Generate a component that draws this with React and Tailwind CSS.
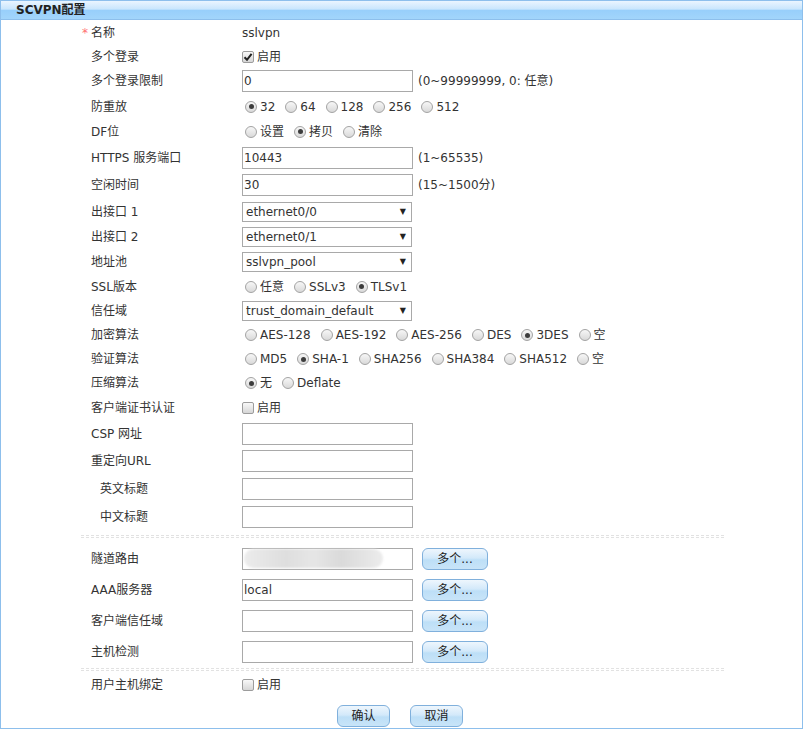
import React from 'react';

const Radio = ({ checked }) => (
  <span className="flex h-[12px] w-[12px] shrink-0 items-center justify-center rounded-full border border-[#a3a3a3] bg-[linear-gradient(to_bottom,#f7f7f7,#d9d9d9)]">
    {checked && <span className="h-[5px] w-[5px] rounded-full bg-[#3c3c3c]" />}
  </span>
);

const Check = ({ checked }) => (
  <span className="flex h-[12px] w-[12px] shrink-0 items-center justify-center rounded-[2px] border border-[#9c9c9c] bg-[linear-gradient(to_bottom,#f8f8f8,#d6d6d6)]">
    {checked && (
      <svg width="10" height="10" viewBox="0 0 10 10">
        <path d="M1.5 5.2 L4 7.8 L8.6 1.8" fill="none" stroke="#222" strokeWidth="2" />
      </svg>
    )}
  </span>
);

const RadioGroup = ({ items, checked }) => (
  <div className="ml-[3px] flex items-center gap-[10px]">
    {items.map((it) => (
      <span key={it} className="flex items-center">
        <Radio checked={it === checked} />
        <span className="ml-[3px]">{it}</span>
      </span>
    ))}
  </div>
);

const Enable = ({ checked }) => (
  <div className="flex items-center">
    <Check checked={checked} />
    <span className="ml-[3px]">启用</span>
  </div>
);

const TextBox = ({ value, children }) => (
  <div className="flex h-[22px] w-[171px] items-center border border-[#a9a9a9] bg-white px-[1px]">
    {value}
    {children}
  </div>
);

const Select = ({ value }) => (
  <div className="flex h-[20px] w-[170px] items-center justify-between border border-[#a9a9a9] bg-white pl-[3px] pr-[5px]">
    <span>{value}</span>
    <span className="text-[8px] text-[#222]">▼</span>
  </div>
);

const Btn = ({ children, w }) => (
  <button className={`flex h-[22px] ${w} items-center justify-center rounded-[6px] border border-[#80b0dc] bg-[linear-gradient(to_bottom,#eef6fd_0%,#d3e9fa_45%,#bddff7_55%,#c8e4f8_100%)] text-[#222]`}>
    {children}
  </button>
);

const Row = ({ label, h, indent, required, children }) => (
  <div className={`flex items-center ${h}`}>
    <div className={`flex w-[241px] shrink-0 items-center ${indent ? 'pl-[99px]' : 'pl-[90px]'}`}>
      {required && <span className="-ml-[9px] w-[9px] text-[#ff7070]">*</span>}
      {label}
    </div>
    <div className="flex items-center">{children}</div>
  </div>
);

const Divider = ({ m }) => (
  <div className={`${m} ml-[80px] h-[3px] w-[643px] border-y border-dashed border-[#e2e2e2]`} />
);

export default function App() {
  return (
    <div className="h-[732px] w-[804px] bg-white font-['DejaVu_Sans','Noto_Sans_CJK_SC',sans-serif] text-[12px] text-[#333]">
      <div className="h-[729px] w-[803px] border border-[#8dbfec]">
        {/* header */}
        <div className="flex h-[19px] items-center border-b border-[#8dbfec] bg-[linear-gradient(to_bottom,#eaf5ff_0%,#c9e6fd_45%,#98cffb_52%,#a2d5fb_100%)] pl-[15px] font-bold text-[#222]">
          SCVPN配置
        </div>

        <Row label="名称" h="h-[25px]" required>
          <span>sslvpn</span>
        </Row>
        <Row label="多个登录" h="h-[23px]">
          <Enable checked />
        </Row>
        <Row label="多个登录限制" h="h-[26px]">
          <TextBox value="0" />
          <span className="ml-[5px]">(0~99999999, 0: 任意)</span>
        </Row>
        <Row label="防重放" h="h-[25px]">
          <RadioGroup items={['32', '64', '128', '256', '512']} checked="32" />
        </Row>
        <Row label="DF位" h="h-[25px]">
          <RadioGroup items={['设置', '拷贝', '清除']} checked="拷贝" />
        </Row>
        <Row label="HTTPS 服务端口" h="h-[27px]">
          <TextBox value="10443" />
          <span className="ml-[5px]">(1~65535)</span>
        </Row>
        <Row label="空闲时间" h="h-[28px]">
          <TextBox value="30" />
          <span className="ml-[5px]">(15~1500分)</span>
        </Row>
        <Row label="出接口 1" h="h-[25px]">
          <Select value="ethernet0/0" />
        </Row>
        <Row label="出接口 2" h="h-[25px]">
          <Select value="ethernet0/1" />
        </Row>
        <Row label="地址池" h="h-[25px]">
          <Select value="sslvpn_pool" />
        </Row>
        <Row label="SSL版本" h="h-[25px]">
          <RadioGroup items={['任意', 'SSLv3', 'TLSv1']} checked="TLSv1" />
        </Row>
        <Row label="信任域" h="h-[24px]">
          <Select value="trust_domain_default" />
        </Row>
        <Row label="加密算法" h="h-[24px]">
          <RadioGroup items={['AES-128', 'AES-192', 'AES-256', 'DES', '3DES', '空']} checked="3DES" />
        </Row>
        <Row label="验证算法" h="h-[24px]">
          <RadioGroup items={['MD5', 'SHA-1', 'SHA256', 'SHA384', 'SHA512', '空']} checked="SHA-1" />
        </Row>
        <Row label="压缩算法" h="h-[24px]">
          <RadioGroup items={['无', 'Deflate']} checked="无" />
        </Row>
        <Row label="客户端证书认证" h="h-[25px]">
          <Enable />
        </Row>
        <Row label="CSP 网址" h="h-[27px]">
          <TextBox />
        </Row>
        <Row label="重定向URL" h="h-[28px]">
          <TextBox />
        </Row>
        <Row label="英文标题" h="h-[28px]" indent>
          <TextBox />
        </Row>
        <Row label="中文标题" h="h-[28px]" indent>
          <TextBox />
        </Row>

        <Divider m="mt-[4px]" />

        <div className="mt-[5px]">
          <Row label="隧道路由" h="h-[31px]">
            <TextBox>
              <div className="h-[19px] w-[139px] rounded-full bg-[linear-gradient(to_right,#ececec,#dedede_30%,#e6e6e6_50%,#dadada_70%,#ececec)] blur-[1px]" />
            </TextBox>
            <div className="ml-[9px]">
              <Btn w="w-[66px]">多个...</Btn>
            </div>
          </Row>
          <Row label="AAA服务器" h="h-[31px]">
            <TextBox value="local" />
            <div className="ml-[9px]">
              <Btn w="w-[66px]">多个...</Btn>
            </div>
          </Row>
          <Row label="客户端信任域" h="h-[31px]">
            <TextBox />
            <div className="ml-[9px]">
              <Btn w="w-[66px]">多个...</Btn>
            </div>
          </Row>
          <Row label="主机检测" h="h-[31px]">
            <TextBox />
            <div className="ml-[9px]">
              <Btn w="w-[66px]">多个...</Btn>
            </div>
          </Row>
        </div>

        <Divider m="mt-[1px]" />

        <Row label="用户主机绑定" h="h-[28px]">
          <Enable />
        </Row>

        <div className="mt-[6px] flex justify-center gap-[20px] pr-[3px]">
          <Btn w="w-[53px]">确认</Btn>
          <Btn w="w-[53px]">取消</Btn>
        </div>
      </div>
    </div>
  );
}
